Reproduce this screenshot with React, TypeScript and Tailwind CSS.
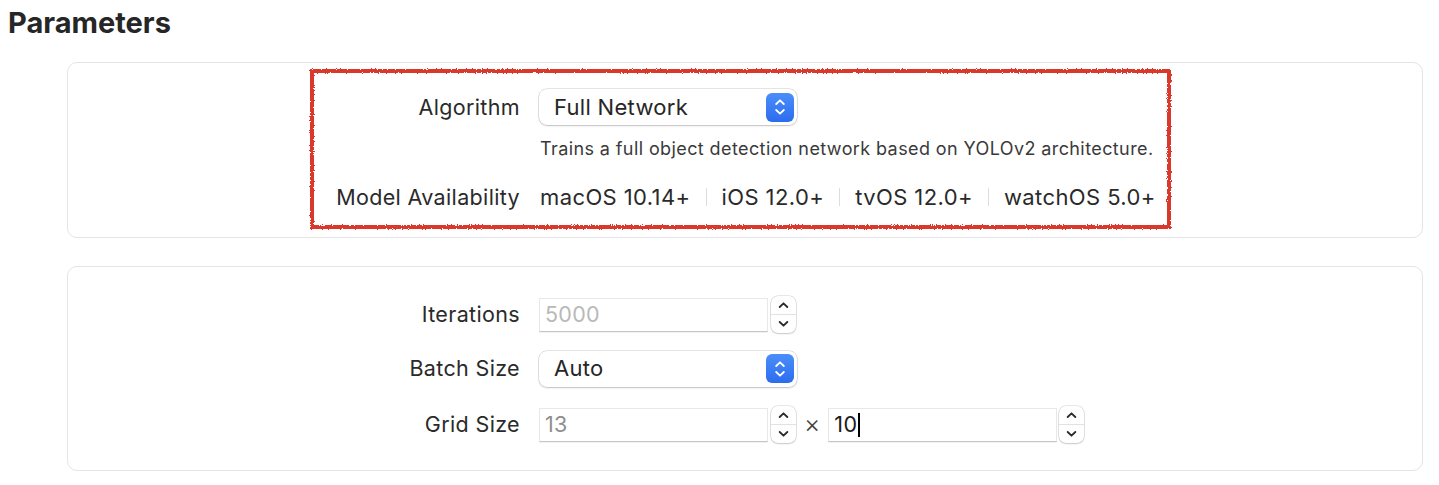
import React from "react";

const ui = "font-[Inter,'Liberation_Sans',sans-serif]";

function Chevron({ dir, color, w = 10 }: { dir: "up" | "down"; color: string; w?: number }) {
  return (
    <svg width={w} height={6} viewBox="0 0 10 6" fill="none">
      <path
        d={dir === "up" ? "M1.2 5L5 1.3L8.8 5" : "M1.2 1L5 4.7L8.8 1"}
        stroke={color}
        strokeWidth={1.8}
        strokeLinecap="round"
        strokeLinejoin="round"
      />
    </svg>
  );
}

function PopUp({ value }: { value: string }) {
  return (
    <div className="flex h-9 w-[258px] items-center justify-between rounded-[8px] bg-white pl-[15px] pr-[3px] shadow-[0_0_0_0.5px_rgba(0,0,0,0.2),0_1px_2px_rgba(0,0,0,0.16)]">
      <span className="text-[22px] tracking-[0.3px] text-[#262626]">{value}</span>
      <div className="flex h-[29px] w-[28px] flex-col items-center justify-center gap-[4px] rounded-[6px] bg-linear-to-b from-[#4b8ef9] to-[#2c6cef]">
        <Chevron dir="up" color="#ffffff" />
        <Chevron dir="down" color="#ffffff" />
      </div>
    </div>
  );
}

function Stepper() {
  return (
    <div className="flex h-[37px] w-[25px] flex-col rounded-[7px] bg-white shadow-[0_0_0_0.5px_rgba(0,0,0,0.18),0_1px_2px_rgba(0,0,0,0.14)]">
      <div className="flex flex-1 items-center justify-center border-b border-[#e2e2e2]">
        <Chevron dir="up" color="#2a2a2a" w={11} />
      </div>
      <div className="flex flex-1 items-center justify-center">
        <Chevron dir="down" color="#2a2a2a" w={11} />
      </div>
    </div>
  );
}

function Field({ value, tone, cursor }: { value: string; tone: string; cursor?: boolean }) {
  return (
    <div className="flex h-[34px] w-[229px] items-center border border-[#e8e8e8] border-b-[#c6c6c6] bg-white pl-[5px] shadow-[0_1px_0_rgba(0,0,0,0.05)]">
      <span className={`text-[21.5px] tracking-[0.3px] ${tone}`}>{value}</span>
      {cursor && <span className="ml-[1px] h-[24px] w-[2px] bg-black" />}
    </div>
  );
}

function Label({ children }: { children: React.ReactNode }) {
  return (
    <div className="w-[206px] shrink-0 text-right text-[21.5px] tracking-[0.35px] text-[#2a2a2a]">
      {children}
    </div>
  );
}

function Sep() {
  return <span className="mx-[15px] h-[18px] w-[1px] bg-[#dcdcdc]" />;
}

export default function App() {
  return (
    <div className={`h-[485px] w-[1439px] overflow-hidden bg-white ${ui}`}>
      <h1 className="mt-[6px] pl-[8px] text-[29px] font-bold leading-[34px] text-[#262626]">
        Parameters
      </h1>

      <div className="ml-[67px] mt-[22px] h-[176px] w-[1356px] rounded-[10px] border-[1.5px] border-[#e4e4e4]">
        <div className="relative ml-[242px] mt-[6px] h-[160px] w-[861px] p-[4px]">
          <svg
            className="pointer-events-none absolute inset-0 overflow-visible"
            width={861}
            height={160}
          >
            <defs>
              <filter id="rough">
                <feTurbulence type="fractalNoise" baseFrequency="0.8" numOctaves="2" seed="3" result="n" />
                <feDisplacementMap in="SourceGraphic" in2="n" scale="3" />
              </filter>
            </defs>
            <rect
              x={2}
              y={2}
              width={857}
              height={156}
              fill="none"
              stroke="#d9372a"
              strokeWidth={4}
              filter="url(#rough)"
            />
          </svg>

          <div className="mt-[16px] flex items-center gap-[19px]">
            <Label>Algorithm</Label>
            <PopUp value="Full Network" />
          </div>
          <div className="mt-[13px] flex gap-[20px]">
            <div className="w-[206px] shrink-0" />
            <p className="text-[18px] leading-[22px] tracking-[0.4px] text-[#3a3a3a]">
              Trains a full object detection network based on YOLOv2 architecture.
            </p>
          </div>
          <div className="mt-[23px] flex items-center gap-[20px] leading-[28px]">
            <Label>Model Availability</Label>
            <div className="flex items-center text-[22px] tracking-[0.4px] text-[#2a2a2a]">
              <span>macOS 10.14+</span>
              <Sep />
              <span>iOS 12.0+</span>
              <Sep />
              <span>tvOS 12.0+</span>
              <Sep />
              <span>watchOS 5.0+</span>
            </div>
          </div>
        </div>
      </div>

      <div className="ml-[67px] mt-[28px] h-[205px] w-[1356px] rounded-[10px] border-[1.5px] border-[#e4e4e4] pl-[246px] pt-[29px]">
        <div className="flex h-[37px] items-center gap-[19px]">
          <Label>Iterations</Label>
          <div className="flex items-center gap-[3px]">
            <Field value="5000" tone="text-[#b9b9b9]" />
            <Stepper />
          </div>
        </div>
        <div className="mt-[17px] flex h-[37px] items-center gap-[19px]">
          <Label>Batch Size</Label>
          <PopUp value="Auto" />
        </div>
        <div className="mt-[19px] flex h-[37px] items-center gap-[19px]">
          <Label>Grid Size</Label>
          <div className="flex items-center gap-[3px]">
            <Field value="13" tone="text-[#8e8e8e]" />
            <Stepper />
            <span className="mx-[5px] text-[25px] font-light leading-none text-[#444444]">×</span>
            <Field value="10" tone="text-[#1a1a1a]" cursor />
            <div className="ml-[-1px]">
              <Stepper />
            </div>
          </div>
        </div>
      </div>
    </div>
  );
}
